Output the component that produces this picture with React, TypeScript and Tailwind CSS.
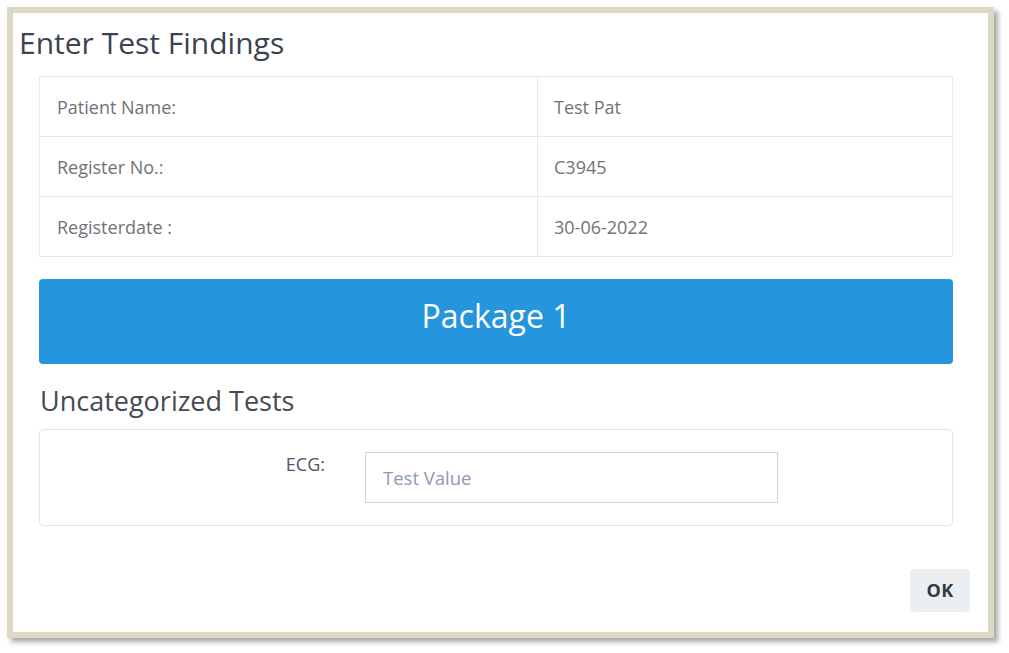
import React from "react";

export default function App() {
  const rows = [
    ["Patient Name:", "Test Pat"],
    ["Register No.:", "C3945"],
    ["Registerdate :", "30-06-2022"],
  ];
  return (
    <div className="w-[1009px] h-[653px] bg-white pt-[7px] pl-[7px]" style={{ fontFamily: '"Open Sans", sans-serif' }}>
      <div className="w-[987px] h-[631px] border-[6px] border-[#ded9c4] bg-white shadow-[4px_4px_5px_rgba(0,0,0,0.35)] flex flex-col">
        <h1 className="pl-[6px] pt-[11px] text-[30px] leading-[38px] text-[#3b4350]">Enter Test Findings</h1>
        <div className="ml-[26px] mr-[35px] mt-[14px]">
          <table className="w-full border-collapse border border-[#e6eaf2]">
            <tbody>
              {rows.map((r) => (
                <tr key={r[0]} className="h-[60px]">
                  <td className="border border-[#e6eaf2] pl-[17px] w-[498px] text-[18px] text-[#6f7378] pt-[2px]">{r[0]}</td>
                  <td className="border border-[#e6eaf2] pl-[16px] text-[18px] text-[#6f7378] pt-[2px]">{r[1]}</td>
                </tr>
              ))}
            </tbody>
          </table>
          <div className="mt-[22px] h-[85px] rounded-[4px] bg-[#2596de] flex items-center justify-center text-white text-[32px] pb-[11px]">
            Package 1
          </div>
          <h2 className="mt-[20px] ml-[1px] text-[27px] leading-[34px] text-[#454b54]">Uncategorized Tests</h2>
          <div className="mt-[11px] h-[97px] rounded-[4px] border border-[#e4e4e4] flex items-start pt-[22px]">
            <div className="w-[285px] text-right text-[18px] text-[#50565e] leading-[24px]">ECG:</div>
            <input
              className="ml-[40px] w-[413px] h-[51px] border border-[#cdd4e6] px-[17px] text-[18.5px] outline-none placeholder:text-[#8d9ab3]"
              placeholder="Test Value"
            />
          </div>
        </div>
        <div className="flex-1" />
        <div className="flex justify-end pr-[18px] pb-[20px]">
          <button className="w-[60px] h-[43px] rounded-[4px] bg-[#eceff1] text-[18px] font-bold text-[#333a40] tracking-wide">OK</button>
        </div>
      </div>
    </div>
  );
}
